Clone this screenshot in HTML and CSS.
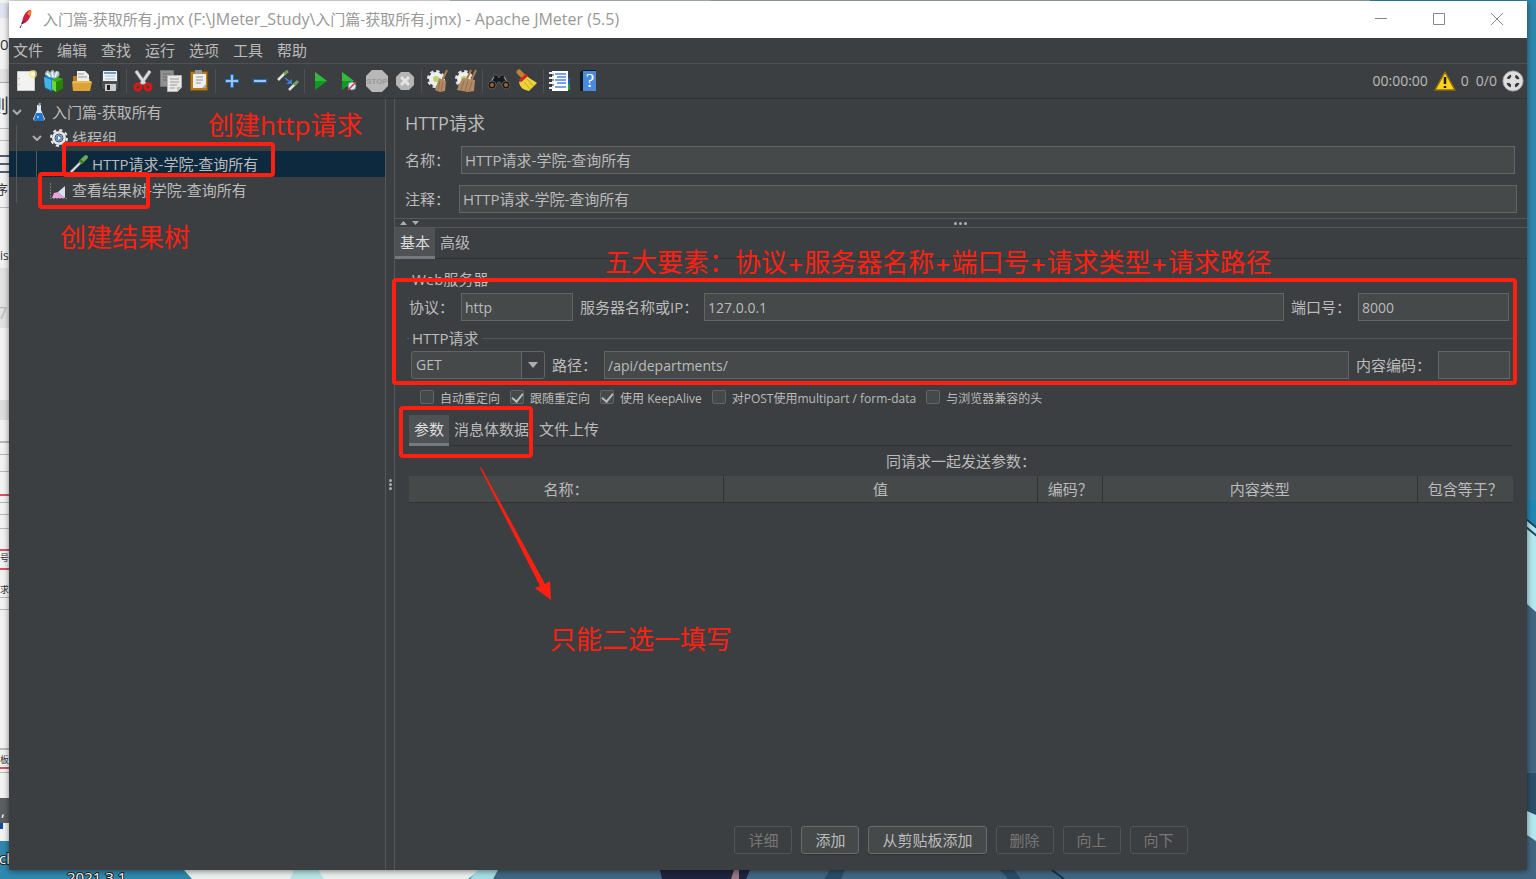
FILE: index.html
```
<!DOCTYPE html>
<html lang="zh-CN">
<head>
<meta charset="utf-8">
<title>入门篇-获取所有.jmx - Apache JMeter (5.5)</title>
<link rel="stylesheet" href="styles.css">
</head>
<body>
<svg class="desktop" viewBox="0 0 1536 879" preserveAspectRatio="xMinYMin slice" aria-hidden="true">
  <rect width="1536" height="879" fill="#2f88ad"/>
  <rect width="450" height="3" fill="#e8eaec"/><rect x="450" width="260" height="3" fill="#b9c5ca"/><rect x="710" width="660" height="3" fill="#9fb1b8"/>
  <rect width="9" height="841" fill="#f3f3f3"/>
  <rect y="3" width="9" height="15" fill="#dfe4f0"/>
  <rect y="69" width="9" height="14" fill="#e4e4e4"/><rect y="82" width="9" height="1" fill="#aaa"/>
  <rect y="128" width="9" height="1" fill="#bbb"/><rect y="140" width="9" height="1" fill="#bbb"/>
  <g fill="#555a70"><rect y="155" width="9" height="2"/><rect y="163" width="9" height="2"/><rect y="171" width="9" height="2"/></g>
  <rect y="207" width="9" height="1" fill="#bbb"/><rect y="268" width="9" height="60" fill="#e3e3e3"/>
  <rect y="400" width="9" height="20" fill="#dedede"/>
  <g fill="#b8b8b8"><rect y="441" width="9" height="2"/><rect y="454" width="9" height="1"/><rect y="471" width="9" height="1"/><rect y="502" width="9" height="1"/><rect y="514" width="9" height="1"/><rect y="528" width="9" height="1"/><rect y="597" width="9" height="1"/><rect y="609" width="9" height="1"/><rect y="748" width="9" height="2"/><rect y="772" width="9" height="1"/></g>
  <g fill="#d65264"><rect y="494" width="9" height="2"/><rect y="549" width="9" height="2"/><rect y="568" width="9" height="2"/><rect y="767" width="9" height="2"/></g>
  <rect y="798" width="9" height="25" fill="#5c5f62"/><rect y="823" width="3" height="6" fill="#1547a0"/>
  <g class="desktop-text"><text x="0" y="50" font-size="15">0</text><text x="-10" y="113" font-size="19">则</text><text x="-5" y="194" font-size="13">序</text><text x="0" y="260" font-size="12">is</text><text x="-2" y="319" font-size="16" fill="#bbb">7</text><text x="0" y="561" font-size="9">号</text><text x="0" y="593" font-size="9">求</text><text x="0" y="763" font-size="9">板</text></g>
  <text x="1" y="816" font-size="15" fill="#fff">,</text>
  <text class="desktop-label" x="-1" y="864" font-size="15">ch</text>
  <path d="M184 870h296l-12 9H192z" fill="#e9f0ee"/><path d="M294 870h24l6 9h-34z" fill="#b9e4e4"/>
  <path d="M480 870h1056v9H470z" fill="#426783"/><path d="M478 870h20l-5 9h-23z" fill="#a5dfe5"/>
  <path d="M660 870h90l-4 9h-84z" fill="#20243e"/><path d="M734 870h5v9h-8z" fill="#967784"/>
  <path d="M830 870h15l-4 9h-17zM1000 870h14l7 9h-13z" fill="#2b4d68"/><path d="M1052 870l12 9" stroke="#1c354d" stroke-width="2"/>
  <rect x="1527" y="500" width="9" height="379" fill="#426783"/>
  <path d="M1527 500h9v28l-9-8z" fill="#2387b4"/><path d="M1527 520l9 8v84l-9-8z" fill="#b4e9ef"/><path d="M1526 527l11 9M1526 519l11 9" stroke="#17465f" stroke-width="2"/>
  <path d="M1527 773h9v43l-9-5z" fill="#2c5069"/><path d="M1527 811l9 4v26l-9-6z" fill="#b4e9ef"/>
  <text class="desktop-label" x="67" y="883" font-size="15">2021.3.1</text>
</svg>

<div class="window">
  <header class="titlebar">
    <svg class="app-icon" width="16" height="22" viewBox="0 0 16 22"><path d="M3 16C3 10 6 4 10 2l2 0c1 5-2 10-6 13z" fill="#c9213f"/><path d="M8 6c1-2 2-4 4-4 1 2 0 4-1 6z" fill="#f08025"/><path d="M3 14l3-2-1 3-3 1z" fill="#6b2a78"/><path d="M1 20l3-6" stroke="#4e1942" fill="none" stroke-dasharray="3 1"/></svg>
    <span class="title"><span>入门篇-获取所有</span>.jmx (F:\JMeter_Study\<span>入门篇-获取所有</span>.jmx) - Apache JMeter (5.5)</span>
    <div class="window-controls">
      <button type="button" aria-label="最小化"><svg width="14" height="14"><path d="M1 6.5h12"/></svg></button>
      <button type="button" aria-label="最大化"><svg width="14" height="14"><path d="M1.500 1.500h11v11h-11z"/></svg></button>
      <button type="button" aria-label="关闭"><svg width="14" height="14"><path d="M1 1l12 12M13 1L1 13"/></svg></button>
    </div>
  </header>

  <nav class="menubar">
    <button type="button">文件</button><button type="button">编辑</button><button type="button">查找</button><button type="button">运行</button><button type="button">选项</button><button type="button">工具</button><button type="button">帮助</button>
  </nav>

  <div class="toolbar">
    <button type="button" aria-label="新建"><svg viewBox="0 0 24 24"><path d="M3.500 2.500h17v19h-17z" fill="#f2f2f0" stroke="#c9c9c6"/><path d="M5 9v1M5 15v1" stroke="#999"/><circle cx="19" cy="5" r="4" fill="#f5e77a" opacity=".7"/><circle cx="19" cy="5" r="2" fill="#fffce0"/></svg></button>
    <button type="button" aria-label="模板"><svg viewBox="0 0 24 24"><path d="M2 8l6-2 6 3v11l-5 2-6-3z" fill="#1b87c7"/><path d="M2 8l7 3v10l-6-3z" fill="#42b4ea"/><path d="M3 6c0-5 4-6 5-2 1-4 5-4 4 0 3-4 7-1 5 3l-4 3-5-2z" fill="#a9c2c6"/><path d="M5 4l3 4M10 3l1 5M15 3l-2 5" stroke="#edf5f5" stroke-width="1.500"/><path d="M10 11l6-3 5 2v9l-7 4-4-3z" fill="#36a910"/><path d="M10 11l4 2v10l-4-3z" fill="#6dd636"/><path d="M14 13l7-3v9l-7 4z" fill="#258500"/></svg></button>
    <button type="button" aria-label="打开"><svg viewBox="0 0 24 24"><path d="M3 7h7l2 3h8v11H3z" fill="#b87918"/><path d="M7 2h8l4 4v8H7z" fill="#eee"/><path d="M8 5h6M8 8h9" stroke="#999"/><path d="M3 12h18l1 1-2 9H3l-1-9z" fill="#dca336"/><path d="M3 13h18" stroke="#f7d277"/></svg></button>
    <button type="button" aria-label="保存"><svg viewBox="0 0 24 24"><path d="M3 3h18v18H5l-2-2z" fill="#4b4e50" stroke="#22282b"/><path d="M5 2h14v10H5z" fill="#eef3f7"/><path d="M6 4h12" stroke="#6d9cc7" stroke-width="2"/><path d="M7 7h10M7 10h10" stroke="#aebfcd"/><path d="M7 15h11v7H7z" fill="#ccc"/><path d="M9 16h3v5H9z" fill="#222"/></svg></button>
    <span class="separator"></span>
    <button type="button" aria-label="剪切"><svg viewBox="0 0 24 24"><path d="M5 2l9 13M19 2L10 15" stroke="#777" stroke-width="4"/><path d="M5 2l9 13M19 2L10 15" stroke="#ddd" stroke-width="2.500"/><g fill="none" stroke="#d91818" stroke-width="3"><ellipse cx="7" cy="18" rx="3" ry="3"/><ellipse cx="17" cy="18" rx="3" ry="3"/></g></svg></button>
    <button type="button" aria-label="复制"><svg viewBox="0 0 24 24"><path d="M1.500 1.500h13v16h-13z" fill="#8f9190" stroke="#777"/><path d="M4 5h8M4 8h8M4 11h6" stroke="#6b6d6d"/><path d="M8.500 6.500h14v12l-4 4h-10z" fill="#e8e9e7" stroke="#b3b3b1"/><path d="M11 10h9M11 13h9M11 16h7M11 19h5" stroke="#999"/><path d="M18 22v-4h4" fill="#bbb"/></svg></button>
    <button type="button" aria-label="粘贴"><svg viewBox="0 0 24 24"><path d="M3.500 2.500h17v19h-17z" fill="#b47d1b" stroke="#835407"/><path d="M6 5h13v14H6z" fill="#eee"/><path d="M8 1h7v4H8z" fill="#999"/><path d="M9 8h7M9 11h7M9 14h5" stroke="#999"/><path d="M15 19l4-4v4z" fill="#aaa"/></svg></button>
    <span class="separator"></span>
    <button type="button" aria-label="展开"><svg viewBox="0 0 24 24"><path d="M12 5v14M5 12h14" stroke="#2868b2" stroke-width="4"/><path d="M12 6v12M6 12h12" stroke="#9ac6f3" stroke-width="2"/></svg></button>
    <button type="button" aria-label="折叠"><svg viewBox="0 0 24 24"><path d="M5 12h14" stroke="#2868b2" stroke-width="4"/><path d="M6 12h12" stroke="#9ac6f3" stroke-width="2"/></svg></button>
    <button type="button" aria-label="切换"><svg viewBox="0 0 24 24"><path d="M2 11l7-7M13 21l7-7" stroke="#dce5dc" stroke-width="2.500"/><path d="M8 5l4-3M18 16l4-4" stroke="#6ba35d" stroke-width="3"/><path d="M9 9l5 4" stroke="#3a80db" stroke-width="1.500"/><path d="M16 10v5h-6z" fill="#3a80db"/></svg></button>
    <span class="separator"></span>
    <button type="button" aria-label="启动"><svg viewBox="0 0 24 24"><path d="M6 3l12 9L6 21z" fill="#129923"/><path d="M6 3l12 9H6z" fill="#35b83d"/></svg></button>
    <button type="button" aria-label="不停顿开始"><svg viewBox="0 0 24 24"><path d="M5 3l12 9L5 21z" fill="#129923"/><path d="M5 3l12 9H5z" fill="#35b83d"/><circle cx="15" cy="17" r="4" fill="#dce8f5" stroke="#7291b5"/><path d="M11 21l8-8" stroke="#d93232" stroke-width="1.500"/></svg></button>
    <button type="button" disabled aria-label="停止"><svg viewBox="0 0 24 24"><path d="M7 1h10l6 6v10l-6 6H7l-6-6V7z" fill="#b8b8b8"/><text x="12" y="15" text-anchor="middle" class="stop-text">STOP</text></svg></button>
    <button type="button" disabled aria-label="关闭"><svg viewBox="0 0 24 24"><path d="M8 3h8l5 5v8l-5 5H8l-5-5V8z" fill="#b5b5b5"/><path d="M8 8l8 8M16 8l-8 8" stroke="#e4e4e4" stroke-width="3"/></svg></button>
    <span class="separator"></span>
    <button type="button" aria-label="清除"><svg viewBox="0 0 24 24"><circle cx="10" cy="10" r="7" fill="none" stroke="#e2e2de" stroke-width="4" stroke-dasharray="3 2.500"/><circle cx="10" cy="10" r="5" fill="#b8d46b" stroke="#eee" stroke-width="4"/><path d="M21 1l-5 11" stroke="#a77c52" stroke-width="2"/><path d="M13 9l7 3-1 10-5 1-5-2 2-6z" fill="#b28a63"/><path d="M14 12l-2 9M17 13l-2 9" stroke="#927150"/></svg></button>
    <button type="button" aria-label="清除全部"><svg viewBox="0 0 24 24"><circle cx="10" cy="10" r="7" fill="none" stroke="#e2e2de" stroke-width="4" stroke-dasharray="3 2.500"/><circle cx="10" cy="10" r="5" fill="#b8d46b" stroke="#eee" stroke-width="4"/><path d="M17 1l-5 11M22 1l-5 11" stroke="#a77c52" stroke-width="2"/><path d="M9 9l12 2-1 11-6 1-11-2 2-6z" fill="#b28a63"/><path d="M10 12l-3 9M14 12l-3 10M18 13l-3 9" stroke="#927150"/></svg></button>
    <span class="separator"></span>
    <button type="button" aria-label="查找"><svg viewBox="0 0 24 24"><path d="M2 16L7 6h3l2 3 2-3h3l5 10-5 2-4-5h-2l-3 5z" fill="#17191a" stroke="#555"/><path d="M7 8l-3 5M17 8l3 5" stroke="#aaa"/><circle cx="5" cy="16" r="4" fill="#191919" stroke="#555"/><circle cx="19" cy="16" r="4" fill="#191919" stroke="#555"/><circle cx="5" cy="16" r="2" fill="#9c643d"/><circle cx="19" cy="16" r="2" fill="#9c643d"/></svg></button>
    <button type="button" aria-label="重置查找"><svg viewBox="0 0 24 24"><path d="M4 3l4 4" stroke="#bf8335" stroke-width="5" stroke-linecap="round"/><path d="M12 7c3 3 6 4 10 7l-8 8c-5-1-9-3-10-9z" fill="#ead339"/><path d="M9 13l6 7M12 10l6 7" stroke="#c9a823"/><path d="M5 12l7-6" stroke="#d42525" stroke-width="3"/></svg></button>
    <span class="separator"></span>
    <button type="button" aria-label="函数助手"><svg viewBox="0 0 24 24"><path d="M19 9h3v6h-3z" fill="#2459c8"/><path d="M19 15h3v6h-3z" fill="#1f9837"/><path d="M4 2h16v20H4z" fill="#fff"/><path d="M7 5h11M9 8h9M7 11h11M9 14h9M7 18h11" stroke="#4b82e8" stroke-width="1.500"/><path d="M1 4h5M1 9h5M1 14h5M1 19h5" stroke="#eee" stroke-width="2"/><path d="M3 6h3M3 11h3M3 16h3" stroke="#222"/></svg></button>
    <button type="button" aria-label="帮助"><svg viewBox="0 0 24 24"><path d="M4 3l3-2h13v21H4z" fill="#141a22"/><path d="M7 2h13v20H7z" fill="#4a8bdd"/><text x="14" y="18" text-anchor="middle" class="help-text">?</text></svg></button>
    <div class="status">
      <span>00:00:00</span>
      <svg width="24" height="24" viewBox="0 0 24 24"><path d="M12 3L2 21h20z" fill="#ffd21f" stroke="#8a6d0b" stroke-width="1.500" stroke-linejoin="round"/><path d="M12 8v7M12 17v2" stroke="#222" stroke-width="2.500"/></svg>
      <span>0</span><span class="threads">0/0</span>
      <svg width="22" height="22" viewBox="0 0 24 24"><circle cx="12" cy="12" r="11" fill="#dedede" stroke="#aaa"/><circle cx="12" cy="12" r="6" fill="none" stroke="#35393b" stroke-width="3" stroke-dasharray="5 4.400" stroke-dashoffset="-2"/><path d="M12 4v16M4 12h16" stroke="#dedede" stroke-width="4"/></svg>
    </div>
  </div>

  <div class="workspace">
    <aside class="tree">
      <div class="row"><span class="toggle"><svg width="10" height="6"><path d="M1 1l4 4 4-4"/></svg></span>
        <svg class="node" viewBox="0 0 20 20"><path d="M8 3h4v5l4 9-2 2H6l-2-2 4-9z" fill="#dce9f2"/><path d="M7 11h6l2 6-1 2H6l-1-2z" fill="#1f74cc"/><path d="M11 1l-1 3" stroke="#aaa" stroke-width="2"/><circle cx="9" cy="15" r="1" fill="#b6dcff"/></svg><span>入门篇-获取所有</span></div>
      <div class="row"><i class="guide"></i><span class="toggle"><svg width="10" height="6"><path d="M1 1l4 4 4-4"/></svg></span>
        <svg class="node" viewBox="0 0 20 20"><circle cx="10" cy="10" r="8" fill="none" stroke="#e5e7ea" stroke-width="2" stroke-dasharray="3.200 3.080"/><circle cx="10" cy="10" r="5" fill="#4c82bd" stroke="#e5e7ea" stroke-width="4"/><circle cx="10" cy="10" r="4" fill="none" stroke="#4a4f63"/><path d="M9 8l3 2-3 2z" fill="#fff"/></svg><span>线程组</span></div>
      <div class="row selected"><i class="guide"></i><i class="guide"></i><span class="toggle"></span>
        <svg class="node" viewBox="0 0 20 20"><path d="M2 18L13 7" stroke="#888" stroke-width="3"/><path d="M2 18L13 7" stroke="#eee" stroke-width="1.500"/><path d="M12 8l5-5" stroke="#6aa756" stroke-width="4" stroke-linecap="round"/><path d="M11 6l3 3" stroke="#397332" stroke-width="2"/></svg><span>HTTP请求-学院-查询所有</span></div>
      <div class="row"><i class="guide"></i><span class="toggle"></span>
        <svg class="node" viewBox="0 0 20 20"><path d="M1.500 3v15.500H18" stroke="#777" stroke-dasharray="2 1" fill="none"/><path d="M3 18l2-5 4-1 3 3 4 3z" fill="#ef9fdc"/><path d="M9 12l7-6v12l-4-3z" fill="#d3e2f5"/></svg><span>查看结果树-学院-查询所有</span></div>
    </aside>
    <div class="divider"><i></i><i></i><i></i></div>

    <main class="editor">
      <h1>HTTP请求</h1>
      <div class="field name"><label for="name">名称：</label><input id="name" value="HTTP请求-学院-查询所有"></div>
      <div class="field comment"><label for="comment">注释：</label><input id="comment" value="HTTP请求-学院-查询所有"></div>
      <div class="splitter">
        <svg width="20" height="6"><path d="M0 5l3.500-4L7 5zM12 1h7l-3.500 4z"/></svg>
        <div class="dots"><i></i><i></i><i></i></div>
      </div>
      <div class="tabs"><button type="button" class="active">基本</button><button type="button">高级</button></div>

      <div class="settings">
        <fieldset>
          <legend>Web服务器</legend>
          <div class="line">
            <label class="l-protocol" for="protocol">协议：</label><input class="i-protocol" id="protocol" value="http">
            <label class="l-server" for="server">服务器名称或IP：</label><input class="grow" id="server" value="127.0.0.1">
            <label class="l-port" for="port">端口号：</label><input class="i-port" id="port" value="8000">
          </div>
        </fieldset>
        <fieldset>
          <legend>HTTP请求</legend>
          <div class="line">
            <div class="select"><select aria-label="请求类型"><option>GET</option><option>POST</option></select><svg width="10" height="6"><path d="M0 0h10L5 6z"/></svg></div>
            <label class="l-path" for="path">路径：</label><input class="grow" id="path" value="/api/departments/">
            <label class="l-encoding" for="encoding">内容编码：</label><input class="i-encoding" id="encoding">
          </div>
        </fieldset>
        <div class="checks">
          <label><input type="checkbox">自动重定向</label>
          <label><input type="checkbox" checked>跟随重定向</label>
          <label><input type="checkbox" checked>使用 KeepAlive</label>
          <label><input type="checkbox">对POST使用multipart / form-data</label>
          <label><input type="checkbox">与浏览器兼容的头</label>
        </div>
        <div class="tabs inner"><button type="button" class="active">参数</button><button type="button">消息体数据</button><button type="button">文件上传</button></div>
        <table>
          <caption>同请求一起发送参数：</caption>
          <thead><tr><th>名称：</th><th>值</th><th class="c-encode">编码？</th><th>内容类型</th><th class="c-equals">包含等于？</th></tr></thead>
        </table>
      </div>
      <footer class="actions">
        <button type="button" disabled>详细</button><button type="button">添加</button><button type="button">从剪贴板添加</button><button type="button" disabled>删除</button><button type="button" disabled>向上</button><button type="button" disabled>向下</button>
      </footer>
    </main>
  </div>

  <div class="mark mark-request"></div>
  <div class="mark mark-result"></div>
  <div class="mark mark-server"></div>
  <div class="mark mark-tabs"></div>
  <p class="note note-request">创建http请求</p>
  <p class="note note-result">创建结果树</p>
  <p class="note note-server">五大要素：协议+服务器名称+端口号+请求类型+请求路径</p>
  <p class="note note-tabs">只能二选一填写</p>
  <svg class="arrow" width="74" height="136" viewBox="0 0 74 136"><path d="M1 2l1-1 64 117 5-3 1 19-16-12 5-2z" fill="#ff2011"/></svg>
</div>
</body>
</html>
```
FILE: styles.css
```
* { box-sizing: border-box; }
body {
  margin: 0;
  height: 100vh;
  padding: 1px 9px 9px;
  overflow: hidden;
  font: 15px/20px "Open Sans", "Noto Sans CJK SC", sans-serif;
  color: #bbb;
}
button, input, select { font: inherit; color: inherit; }
button { border: 0; padding: 0; background: none; }
.desktop { position: absolute; inset: 0; width: 100%; height: 100%; }
.desktop-text { fill: #333; }
.desktop-label { fill: #fff; stroke: #222; stroke-width: 2px; paint-order: stroke; }

.window {
  position: relative;
  display: flex;
  flex-direction: column;
  height: 100%;
  background: #3c3f41;
  box-shadow: 0 1px 6px rgba(0, 0, 0, .5);
}
.titlebar {
  display: flex;
  align-items: center;
  height: 37px;
  flex: none;
  padding: 0 1px 2px 10px;
  background: #fff;
  color: #999;
}
.title { margin-left: 8px; font-size: 16px; white-space: nowrap; }
.title span { font-size: 15px; }
.window-controls { display: flex; margin-left: auto; }
.window-controls button { display: grid; place-items: center; width: 58px; height: 35px; }
.window-controls path { fill: none; stroke: #888; }

.menubar {
  display: flex;
  gap: 14px;
  height: 26px;
  flex: none;
  padding: 0 4px 2px;
  border-bottom: 1px solid #515151;
}
.toolbar {
  display: flex;
  align-items: center;
  height: 35px;
  flex: none;
  padding-left: 3px;
  border-bottom: 1px solid #323232;
}
.toolbar button { display: grid; place-items: center; width: 28px; height: 28px; }
.toolbar button svg { width: 24px; height: 24px; fill: none; }
.separator { width: 1px; height: 24px; margin: 0 2px; background: #515151; }
.stop-text { font: bold 8px "Liberation Sans", sans-serif; fill: #989898; }
.help-text { font: 19px "Liberation Serif", serif; fill: #fff; }
.status { display: flex; align-items: center; margin-left: auto; padding-right: 3px; font-size: 14px; gap: 5px; }
.status svg { fill: none; }
.status span:nth-of-type(2) { margin-left: -1px; }
.threads { margin-left: 2px; }

.workspace { display: flex; flex: 1; min-height: 0; }
.tree { width: 376px; flex: none; }
.row { display: flex; align-items: center; height: 26px; white-space: nowrap; }
.selected { background: #0d293e; }
.toggle { display: grid; place-items: center; width: 16px; margin-right: 4px; }
.toggle path { fill: none; stroke: #adadad; stroke-width: 2; }
.guide { width: 1px; align-self: stretch; margin: 0 12px 0 7px; background: #55585a; }
.node { width: 20px; height: 20px; margin-right: 3px; fill: none; }
.divider {
  display: flex;
  flex-direction: column;
  justify-content: center;
  align-items: center;
  gap: 1px;
  width: 10px;
  flex: none;
  border: solid #55585a;
  border-width: 0 1px;
}
.divider i, .dots i { width: 3px; height: 3px; border-radius: 50%; background: #adadad; }

.editor { display: flex; flex-direction: column; flex: 1; min-width: 0; }
h1 { margin: 12px 0 0 10px; font-size: 18px; line-height: 24px; font-weight: 400; }
.field { display: flex; align-items: center; padding-left: 10px; }
.name { margin-top: 11px; padding-right: 12px; }
.comment { margin-top: 11px; padding-right: 10px; }
.name label { width: 56px; }
.comment label { width: 54px; }
input, select {
  height: 28px;
  min-width: 0;
  padding: 0 3px 2px;
  border: 1px solid #646464;
  border-radius: 0;
  outline: 0;
  background: #45494a;
}
.field input, .grow { flex: 1; }
.splitter {
  display: flex;
  align-items: center;
  height: 10px;
  margin-top: 5px;
  padding-left: 5px;
  border: solid #55585a;
  border-width: 1px 0;
}
.splitter svg { fill: #adadad; }
.dots { display: flex; gap: 2px; margin: 0 auto; padding-right: 27px; }
.tabs { display: flex; border-bottom: 1px solid #323232; }
.tabs button { height: 31px; padding: 0 5px; border-bottom: 3px solid transparent; margin-bottom: -1px; white-space: nowrap; }
.tabs .active { background: #4e5254; border-color: #747a80; color: #ddd; }

.settings { padding: 10px 14px 0 12px; }
fieldset { min-width: 0; margin: 0; padding: 4px 4px 7px 2px; border: 0; border-top: 1px solid #55585a; }
fieldset + fieldset { padding: 3px 3px 0 2px; }
legend { padding: 0 3px; height: 20px; }
.line { display: flex; align-items: center; white-space: nowrap; }
.line label { margin-left: 7px; }
.line .l-protocol { width: 52px; margin-left: 0; }
.i-protocol { width: 112px; }
.l-server { width: 124px; }
.l-port { width: 67px; }
.i-port { width: 151px; }
.l-path { width: 52px; }
.l-encoding { width: 82px; }
.i-encoding { width: 72px; }
.line input { padding-bottom: 0; font-size: 14px; }
.select { display: grid; align-items: center; width: 134px; margin-left: 2px; }
.select select, .select svg { grid-area: 1 / 1; }
.select select {
  appearance: none;
  width: 100%;
  padding: 0 4px;
  font-size: 14px;
  border-radius: 3px;
  background: linear-gradient(90deg, #45494a 109px, #646464 109px 110px, #3c3f41 110px);
}
.select svg { justify-self: end; margin-right: 7px; fill: #adadad; pointer-events: none; }
.checks { display: flex; gap: 10px; padding: 10px 0 0 13px; font-size: 12px; line-height: 20px; white-space: nowrap; }
.checks label { display: flex; align-items: center; gap: 6px; }
.checks input {
  display: grid;
  place-items: center;
  appearance: none;
  width: 14px;
  height: 14px;
  margin: 0 0 4px;
  padding: 0;
  border-radius: 2px;
}
.checks input:checked::after {
  content: "";
  width: 5px;
  height: 9px;
  margin-bottom: 3px;
  border: solid #bbb;
  border-width: 0 2px 2px 0;
  transform: rotate(40deg);
}
.inner { margin: 6px 0 0 2px; }
table { width: calc(100% - 2px); margin-left: 2px; border-collapse: collapse; table-layout: fixed; }
caption { padding: 5px 0; }
th { height: 26px; padding: 0; font-weight: 400; background: #45494a; border-bottom: 1px solid #323232; }
th + th { border-left: 1px solid #323232; }
.c-encode { width: 65px; }
.c-equals { width: 96px; }
.actions { display: flex; justify-content: center; gap: 9px; margin-top: auto; padding-bottom: 16px; }
.actions button {
  height: 28px;
  padding: 0 13px;
  border: 1px solid #6b6d6e;
  border-radius: 3px;
  background: #45494a;
  box-shadow: 0 1px 1px #333;
}
.actions button:disabled { color: #777; border-color: #525455; background: none; box-shadow: none; }

.mark { position: absolute; border: 4px solid #ff2011; border-radius: 4px; pointer-events: none; }
.mark-request { left: 53px; top: 141px; width: 213px; height: 35px; }
.mark-result { left: 29px; top: 171px; width: 112px; height: 37px; }
.mark-server { left: 383px; right: 10px; top: 277px; height: 107px; }
.mark-tabs { left: 390px; top: 405px; width: 134px; height: 52px; }
.note {
  position: absolute;
  margin: 0;
  font: 400 26px/32px Inter, "Noto Sans CJK SC", sans-serif;
  color: #ff2011;
  white-space: nowrap;
}
.note-request { left: 199px; top: 108px; font-family: "Open Sans", "Noto Sans CJK SC", sans-serif; }
.note-result { left: 51px; top: 221px; }
.note-server { left: 596px; top: 246px; }
.note-tabs { left: 541px; top: 623px; }
.arrow { position: absolute; left: 470px; top: 465px; }
```
